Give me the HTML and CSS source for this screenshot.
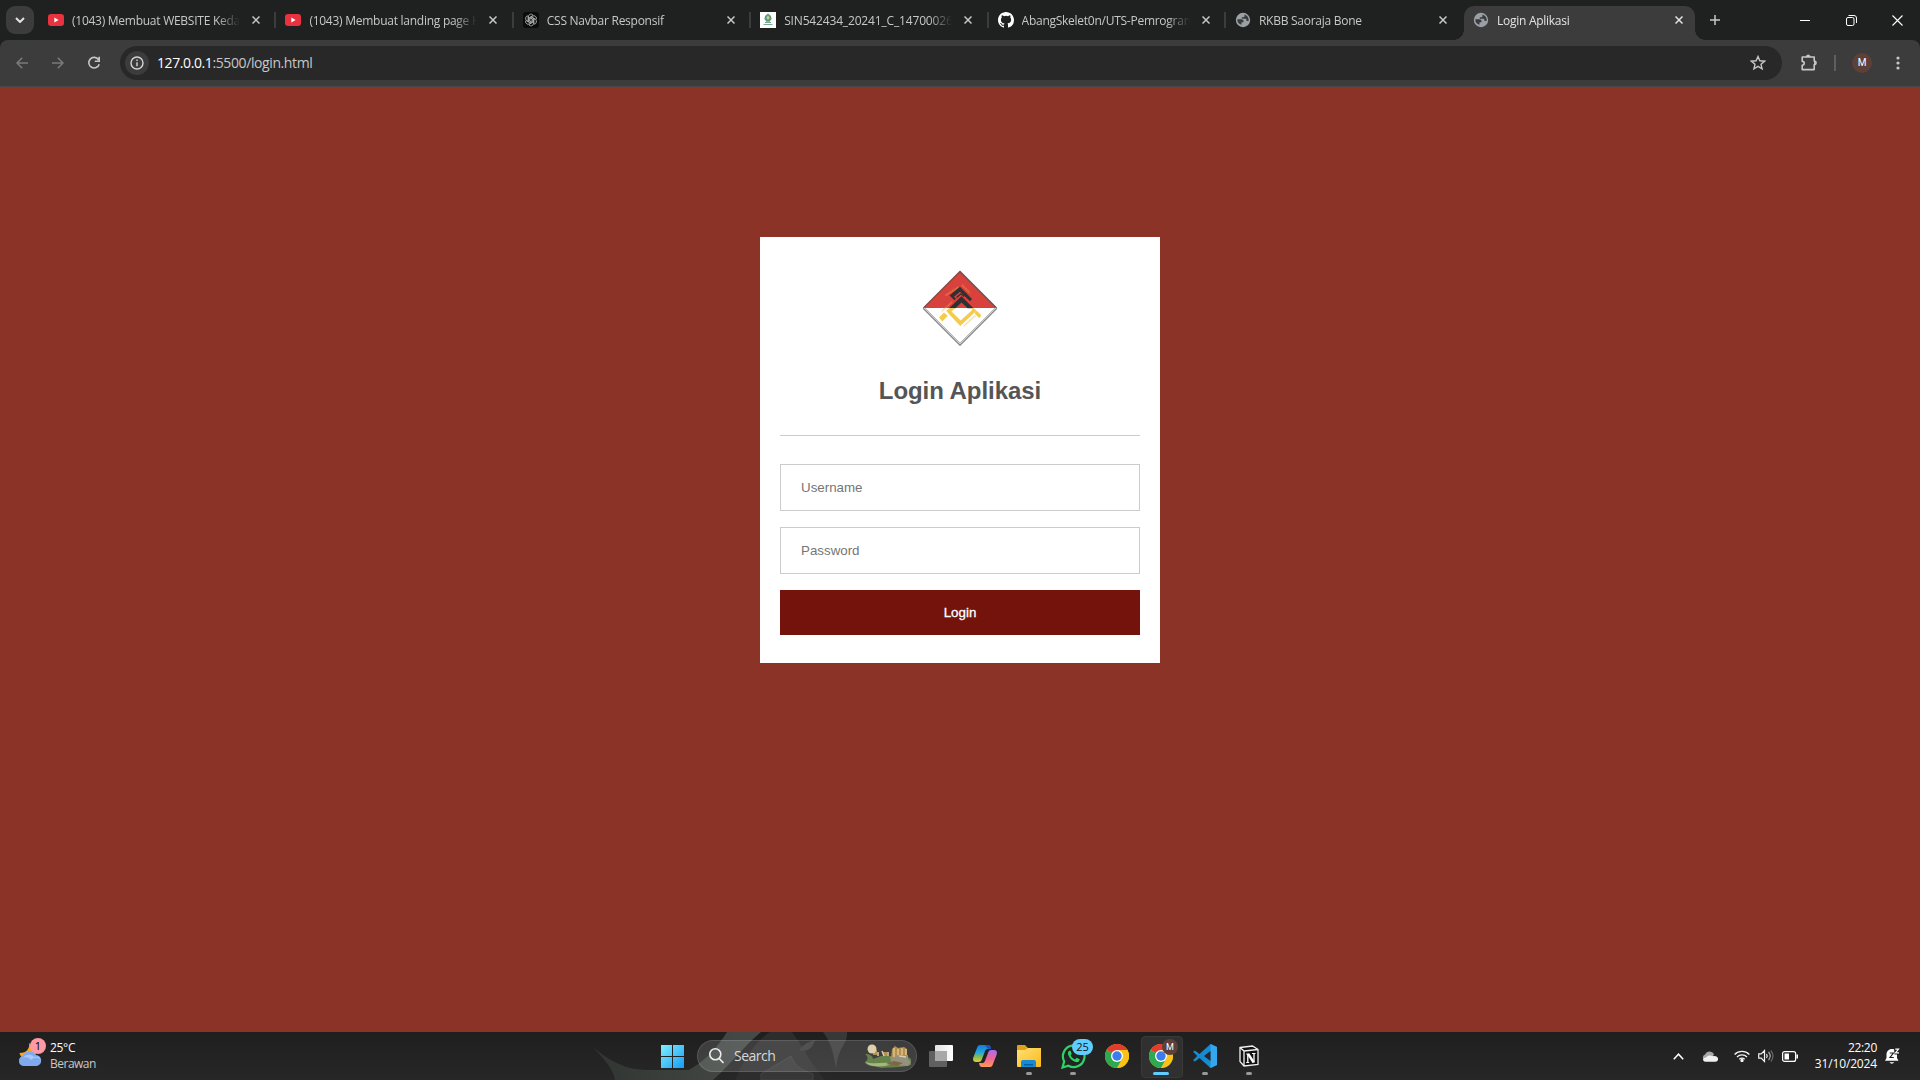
FILE: index.html
```
<!DOCTYPE html>
<html lang="id">
<head>
<meta charset="utf-8">
<title>Login Aplikasi</title>
<link rel="stylesheet" href="styles.css">
</head>
<body>
<svg width="0" height="0" class="defs">
  <defs>
    <symbol id="close" viewBox="0 0 8 8"><path d="M.5.5l7 7M7.5.5l-7 7" fill="none" stroke="currentColor" stroke-width="1.5"/></symbol>
    <symbol id="youtube" viewBox="0 0 16 16"><rect y="2" width="16" height="12" rx="3" fill="#e8323f"/><path d="M6.300 5.600v4.800L10.600 8z" fill="#fff"/></symbol>
    <symbol id="globe" viewBox="0 0 16 16"><circle cx="8" cy="8" r="7.200" fill="#9aa0a6"/><path d="M2.400 7.200h3.800c1.400 0 2.300.7 2.300 1.800v1.200h-2v2.600C3.700 12.200 2 9.900 2.400 7.200z" fill="#393b3c"/><path d="M9.500 2.600v1.300c0 .8-.6 1.300-1.400 1.300H6.800v1.500h3.400c.9 0 1.300.6 1.300 1.400v1h2.100c.5-2.900-1.200-5.700-4.100-6.500z" fill="#393b3c"/></symbol>
    <symbol id="chrome" viewBox="0 0 24 24">
      <circle cx="12" cy="12" r="12" fill="#fbc116"/>
      <path d="M12 12L1.600 6A12 12 0 0 1 22.400 6H12z" fill="#e33b2e"/>
      <path d="M12 12L1.600 6A12 12 0 0 0 12 24l5.200-9z" fill="#2da94f"/>
      <path d="M12 6h10.400A12 12 0 0 1 12 24l5.200-9z" fill="#fbc116"/>
      <circle cx="12" cy="12" r="6" fill="#fff"/><circle cx="12" cy="12" r="4.700" fill="#3b7ded"/>
    </symbol>
  </defs>
</svg>

<header class="tabstrip">
  <div class="tab-search"><svg width="10" height="6" viewBox="0 0 10 6"><path d="M1 1l4 4 4-4" fill="none" stroke="#e3e3e3" stroke-width="2"/></svg></div>
  <div class="tabs">
    <div class="tab"><svg class="favicon"><use href="#youtube"/></svg><span class="tab-title">(1043) Membuat WEBSITE Kedai</span><svg class="close"><use href="#close"/></svg></div>
    <div class="tab"><svg class="favicon"><use href="#youtube"/></svg><span class="tab-title">(1043) Membuat landing page H</span><svg class="close"><use href="#close"/></svg></div>
    <div class="tab"><svg class="favicon" viewBox="0 0 16 16"><rect width="16" height="16" rx="3" fill="#0b0b0b"/><g fill="none" stroke="#b8b8b8" stroke-width=".8"><path id="petal" d="M5.400 9.400V4.700a2.600 2.600 0 0 1 4.700-1.500M6.700 8.700V5.500L9.900 3.600"/><use href="#petal" transform="rotate(60 8 8)"/><use href="#petal" transform="rotate(120 8 8)"/><use href="#petal" transform="rotate(180 8 8)"/><use href="#petal" transform="rotate(240 8 8)"/><use href="#petal" transform="rotate(300 8 8)"/></g></svg><span class="tab-title">CSS Navbar Responsif</span><svg class="close"><use href="#close"/></svg></div>
    <div class="tab"><svg class="favicon" viewBox="0 0 16 16"><rect width="16" height="16" fill="#fff"/><path d="M8 1.500l3 2.500.6 3-2 2.700H6.400l-2-2.700L5 4z" fill="#5d9c83"/><path d="M8 3.300l1.500 2.500L8 8 6.500 5.800z" fill="#d8cf8d"/><path d="M5 10.500h6M3.500 12.500h9" stroke="#76a894" stroke-width="1"/></svg><span class="tab-title sin">SIN542434_20241_C_147000268</span><svg class="close"><use href="#close"/></svg></div>
    <div class="tab"><svg class="favicon" viewBox="0 0 16 16"><path fill="#fff" d="M8 0C3.580 0 0 3.580 0 8c0 3.540 2.290 6.530 5.470 7.590.4.070.55-.17.55-.38 0-.19-.01-.82-.01-1.490-2.010.37-2.530-.49-2.690-.94-.09-.23-.48-.94-.82-1.130-.28-.15-.68-.52-.01-.53.63-.01 1.080.58 1.230.82.72 1.210 1.870.87 2.330.66.07-.52.28-.87.51-1.070-1.780-.2-3.640-.89-3.640-3.950 0-.87.31-1.590.82-2.150-.08-.2-.36-1.020.08-2.120 0 0 .67-.21 2.200.82a7.600 7.600 0 0 1 4 0c1.530-1.040 2.200-.82 2.200-.82.44 1.100.16 1.920.08 2.120.51.56.82 1.270.82 2.150 0 3.070-1.870 3.750-3.650 3.950.29.25.54.73.54 1.480 0 1.070-.01 1.930-.01 2.200 0 .21.15.46.55.38A8 8 0 0 0 16 8c0-4.420-3.580-8-8-8z"/></svg><span class="tab-title">AbangSkelet0n/UTS-Pemrogram</span><svg class="close"><use href="#close"/></svg></div>
    <div class="tab"><svg class="favicon"><use href="#globe"/></svg><span class="tab-title">RKBB Saoraja Bone</span><svg class="close"><use href="#close"/></svg></div>
    <div class="tab active"><svg class="favicon"><use href="#globe"/></svg><span class="tab-title">Login Aplikasi</span><svg class="close"><use href="#close"/></svg></div>
  </div>
  <div class="new-tab"><svg width="10" height="10"><path d="M5 0v10M0 5h10" stroke="#c7c7c7" stroke-width="1.500"/></svg></div>
  <div class="window-controls">
    <div><svg width="10" height="10"><path d="M0 5.500h10" stroke="#fff"/></svg></div>
    <div><svg width="11" height="11" fill="none" stroke="#fff"><rect x=".5" y="2.500" width="7.500" height="8" rx="1.500"/><path d="M2.500 .5h5.500a2.500 2.500 0 0 1 2.500 2.500v5"/></svg></div>
    <div><svg width="11" height="11"><path d="M.5.5l10 10M10.500.5l-10 10" stroke="#fff" stroke-width="1.100"/></svg></div>
  </div>
</header>

<nav class="toolbar">
  <div class="nav-btn"><svg width="12" height="12" viewBox="0 0 12 12" fill="none" stroke="#7a7a7a" stroke-width="1.500"><path d="M12 6H1M6.200.7L1 6l5.200 5.300"/></svg></div>
  <div class="nav-btn"><svg width="12" height="12" viewBox="0 0 12 12" fill="none" stroke="#7a7a7a" stroke-width="1.500"><path d="M0 6h11M5.800.7L11 6l-5.200 5.300"/></svg></div>
  <div class="nav-btn"><svg width="14" height="14" viewBox="0 0 14 14" fill="none" stroke="#c7c7c7" stroke-width="1.600"><path d="M11.500 3.700A5.300 5.300 0 1 0 12.200 8.200M12.200.8v4.400H7.800"/></svg></div>
  <div class="omnibox">
    <div class="site-info"><svg width="14" height="14" viewBox="0 0 14 14"><circle cx="7" cy="7" r="6" fill="none" stroke="#d5d5d5" stroke-width="1.400"/><path d="M7 6.200v4M7 3.500V5" stroke="#d5d5d5" stroke-width="1.400"/></svg></div>
    <span class="url"><b>127.0.0.1</b>:5500/login.html</span>
    <svg class="star" width="16" height="16" viewBox="0 0 16 16"><path d="M8 1.500l1.900 4.300 4.700.4-3.600 3.100 1.100 4.600L8 11.400l-4.100 2.500L5 9.300 1.400 6.200l4.700-.4z" fill="none" stroke="#c7c7c7" stroke-width="1.400"/></svg>
  </div>
  <div class="extensions"><svg width="18" height="18" viewBox="0 0 18 18"><path d="M2.200 3h12v4c2.400-.2 2.400 3.600 0 3.600v5h-12v-4.300c2.700-.3 2.700-3.700 0-3.900z" fill="none" stroke="#c7c7c7" stroke-width="1.600" stroke-linejoin="round"/><path d="M6.200 3a2 2 0 0 1 4 0M14 7a2 2 0 0 1 0 3.600" fill="#c7c7c7" stroke="#c7c7c7"/></svg></div>
  <i class="divider"></i>
  <div class="avatar">M</div>
  <svg class="dots" width="4" height="16" fill="#c7c7c7"><circle cx="2" cy="3" r="1.600"/><circle cx="2" cy="8" r="1.600"/><circle cx="2" cy="13" r="1.600"/></svg>
</nav>

<main class="page">
  <form class="login-card">
    <svg class="logo" width="76" height="76" viewBox="0 0 76 76">
      <path d="M38 1.500L74.500 38h-73z" fill="#d9423c"/>
      <path d="M1.500 38L38 1.500 74.500 38" fill="none" stroke="#7a4a4b" stroke-width="1.500"/>
      <path d="M1.500 38L38 74.500 74.500 38" fill="none" stroke="#8b8b8b" stroke-width="2.400"/>
      <path d="M2 38L38 74 74 38" fill="none" stroke="#dedede" stroke-width=".8"/>
      <path d="M27.500 25.500L38 16.800 50 29l-2 2.200L38 21.800l-6 5 2 2-1.500 1.500z" fill="#303032"/>
      <path d="M34.500 27.500l4.500-3.700 3 2.700" fill="none" stroke="#303032" stroke-width="1.300"/>
      <path d="M27 38.200L39.500 26.300 51.500 38.200h-6L39.500 32.500 33.500 38.200z" fill="#303032"/>
      <path d="M27 38.200h6l-3.500 3.300 9.200 9 11.800-10.700-1.500-1.600h3l2.500 2.600L38.200 56 24.200 41z" fill="#f5cb49"/>
      <path d="M17 47.500l5-5 3.800 3.300-5.500 5.700z" fill="#f5cb49"/>
      <path d="M52.500 43l2.300-2.300 4.700 4.800-2.500 2.500z" fill="#f5cb49"/>
      <path d="M23.500 25.500L36.500 17M40 15l8 8M20 41l10-9M42 56l12-11" fill="none" stroke="#e7b34b" stroke-width="1.800" stroke-dasharray="1 .6" opacity=".55"/>
    </svg>
    <h1>Login Aplikasi</h1>
    <hr>
    <input type="text" placeholder="Username">
    <input type="password" placeholder="Password">
    <button type="button">Login</button>
  </form>
</main>

<footer class="taskbar">
  <svg class="wallpaper" width="290" height="48" viewBox="0 0 290 48">
    <defs><linearGradient id="sweep"><stop stop-color="#303532"/><stop offset="1" stop-color="#464b48"/></linearGradient></defs>
    <path d="M1 15c16 14 33 23 54 23h42C115 28 126 14 135 0h34c-15 12-32 34-48 48H23C22 37 9 24 1 15z" fill="url(#sweep)"/>
    <path d="M178 0c-14 9-26 26-35 48h90c-8-10-16-20-20-29L200 0z" fill="#2d2d2d"/>
    <path d="M169 48v-6l30-18c3 9 10 14 22 18v6z" fill="#373737" stroke="#424242"/>
    <path d="M207 19c3-6 9-9 16-11-2 8-6 11-16 11zM231 0h24c1 13-9 13-11 38-2-14-4-26-13-38z" fill="#383838"/>
  </svg>
  <div class="weather">
    <div class="weather-icon">
      <svg width="26" height="24" viewBox="0 0 26 24"><path d="M11 0c1 5-2 10-9.500 10 1 4 4 6 8 6 5 0 9-4 9-9z" fill="#f7a823"/><path d="M5.500 23a5 5 0 0 1-.4-9.900A7 7 0 0 1 18 12a5.600 5.600 0 0 1 1 11z" fill="#7faaf0"/><path d="M3 16c4-3 8-2 10 1 3-3 7-3 10 0-2-4-5-4-7-3-3-4-10-2-10 0z" fill="#a9c7fb"/></svg>
      <b class="weather-badge">1</b>
    </div>
    <div class="weather-text"><span class="temp">25°C</span><span class="sky">Berawan</span></div>
  </div>
  <div class="apps">
    <div class="app start"><svg width="23" height="23"><defs><linearGradient id="win" x1="0" y1="0" x2="23" y2="23" gradientUnits="userSpaceOnUse"><stop stop-color="#82efff"/><stop offset="1" stop-color="#139df5"/></linearGradient></defs><path d="M0 0h11v11H0zM12 0h11v11H12zM0 12h11v11H0zM12 12h11v11H12z" fill="url(#win)"/></svg></div>
    <div class="search">
      <svg width="16" height="16" viewBox="0 0 16 16"><circle cx="6.300" cy="6.300" r="5.500" fill="none" stroke="#ececec" stroke-width="1.600"/><path d="M10.200 10.500l4.300 4.500" stroke="#ececec" stroke-width="1.800"/></svg>
      <span>Search</span>
      <svg class="doodle" width="48" height="24" viewBox="0 0 48 24"><path d="M1 10c5 0 8 2 8 5l8-3h26l4 3v6c-10 3-22 2-29 3C9 22 2 22 1 18c4-3 3-5 0-8z" fill="#66814b"/><path d="M1 18c10 3 20-1 27 2-7 3-22 4-27-2z" fill="#a4b879"/><path d="M9 6h4v5H9zM19 8h4v4h-4zM28 5l3-3 3 2 6-1 3 2v9H27z" fill="#b39052"/><path d="M30 4v9M34 5v8M38 4v9M42 5v8" stroke="#ead094" stroke-width="1.200"/><path d="M26 13h5l3-2h10v4l3 3-3 4-16-1z" fill="#96917f"/><path d="M14 8v4M18 7l2 5M24 8v4M35 12l7 1" stroke="#d8cfae" stroke-width="1.500"/><path d="M22 20l8-3 9 2-6 3z" fill="#7c6844"/><circle cx="8" cy="5" r="4.500" fill="#ddd0ad"/></svg>
    </div>
    <div class="app"><svg width="24" height="22"><defs><linearGradient id="tv"><stop stop-color="#e1e1e1"/><stop offset="1" stop-color="#fff"/></linearGradient></defs><rect x="6" width="18" height="16" rx="1" fill="url(#tv)"/><rect y="6" width="18" height="16" rx="1" fill="#606060"/><path d="M6 6h12v10H6z" fill="#a8a8a8"/></svg></div>
    <div class="app"><svg width="24" height="23" viewBox="0 0 24 23"><defs><linearGradient id="cp" x1="0" y1="0" x2="0" y2="1"><stop stop-color="#127ce0"/><stop offset=".45" stop-color="#28a8d8"/><stop offset=".65" stop-color="#6dbb65"/><stop offset="1" stop-color="#f1c82b"/></linearGradient><linearGradient id="cp2" x1="0" y1="0" x2="0" y2="1"><stop stop-color="#a66df2"/><stop offset=".5" stop-color="#ee6697"/><stop offset="1" stop-color="#ff9a53"/></linearGradient></defs><path d="M7 0h8c2 0 2.500 1.500 3 4h-3.500c-2 0-2.500 2-3 3.500L9 14c-.5 2-1.500 3-3.500 3H3c-3 0-3.500-2.500-2.500-5L4 3C4.500 1 5.500 0 7 0z" fill="url(#cp)"/><path d="M17 22H9c-2 0-2.500-1.500-3-4h3.500c2 0 2.500-2 3-3.500L15 8c.5-2 1.500-3 3.500-3H21c3 0 3.500 2.500 2.500 5L20 19c-.5 2-1.500 3-3 3z" fill="url(#cp2)"/><path d="M12 0h3c2 0 2.500 1.500 3 4h-3z" fill="#1755bd"/></svg></div>
    <div class="app running"><svg width="24" height="22" viewBox="0 0 24 22"><defs><linearGradient id="folder" x2="1" y2="1"><stop stop-color="#ffe074"/><stop offset="1" stop-color="#fab91a"/></linearGradient></defs><path d="M0 1q0-1 1-1h7l3 3h12l1 2v5H0z" fill="#dfa116"/><path d="M0 5h8l3-2h13v18q0 1-1 1H1q-1 0-1-1z" fill="url(#folder)"/><path d="M4 22v-5q0-2 2-2h11q2 0 2 2v5z" fill="#168bd4"/><path d="M7 19h9v1.500H7z" fill="#075da8"/></svg></div>
    <div class="app running"><svg width="25" height="25" viewBox="0 0 25 25"><path d="M1.500 23.500l1.700-6.100a10.800 10.800 0 1 1 4.200 4.300z" fill="none" stroke="#2bd464" stroke-width="2.200"/><path d="M8.200 6.700c-1.300 1-1.600 2.600-.8 4.500 1.200 3 4 5.900 7.200 6.900 2 .6 3.900-.5 4.100-2.900l-3-1.500-1.600 1.700c-2.200-.8-3.600-2.200-4.500-4.200l1.100-1.500-1.200-3z" fill="#2bd464"/></svg><b class="count">25</b></div>
    <div class="app"><svg width="24" height="24"><use href="#chrome"/></svg></div>
    <div class="app running current"><svg width="24" height="24"><use href="#chrome"/></svg><b class="profile">M</b></div>
    <div class="app running"><svg width="24" height="24" viewBox="0 0 24 24"><path d="M17.500 0L24 3v18l-6.500 3L6.500 14 2 17.500l-2-1.300L4.200 12 0 7.800l2-1.300L6.500 10z" fill="#168bd2"/><path d="M17.500 0L24 3v18l-6.500 3z" fill="#35a8ed"/><path d="M17.500 7v10L11 12z" fill="#252525"/></svg></div>
    <div class="app running"><svg width="20" height="22" viewBox="0 0 20 22"><path d="M1 2.500L13.500 1 19 4.500v15L5 21l-4-4.500z" fill="#111" stroke="#f0f0f0" stroke-width="1.300"/><path d="M1 2.500L5 6l14-1.500M5 6v15" fill="none" stroke="#f0f0f0" stroke-width="1.300"/><path d="M7.300 9h2.700M13 8.500h3.500M7.200 17.500h3" stroke="#fff" stroke-width="1.200"/><path d="M8.800 9v8.500M15 8.500v9" stroke="#fff" stroke-width="1.300"/><path d="M9.200 9l5.500 8.500" stroke="#fff" stroke-width="2.400"/></svg></div>
  </div>
  <div class="tray">
    <div class="tray-item"><svg width="11" height="7"><path d="M.8 6.200l4.700-5 4.700 5" fill="none" stroke="#fff" stroke-width="1.500"/></svg></div>
    <div class="tray-item"><svg width="16" height="11" viewBox="0 0 16 11"><path d="M3.500 10A3.400 3.400 0 0 1 3 3.500a5 5 0 0 1 9-.5l-3 7z" fill="#a7a7a7"/><path d="M3.500 10.700C0 10 .6 6.800 4 6.500c2-2.600 5-2.400 7-1.300 6-1 6.500 5 2.500 5.500z" fill="#f0f0f0"/></svg></div>
    <div class="tray-item"><svg width="16" height="12" viewBox="0 0 16 12" fill="none" stroke="#f4f4f4" stroke-width="1.300"><path d="M.6 4.500a10.500 10.500 0 0 1 14.800 0M3 7a7 7 0 0 1 10 0M5.300 9.300a4 4 0 0 1 5.400 0"/><circle cx="8" cy="10.500" r="1" fill="#fff"/></svg></div>
    <div class="tray-item volume"><svg width="16" height="14" viewBox="0 0 16 14" fill="none" stroke="#f0f0f0" stroke-width="1.200"><path d="M.7 4.800h2.500L6.500 1.500v11L3.200 9.200H.7zM8.500 5q1.500 2 0 4"/><path d="M10.500 3q3.500 4 0 8" stroke="#aaa"/><path d="M12.800 1.500q4.500 5.500 0 11" stroke="#666"/></svg></div>
    <div class="tray-item"><svg width="16" height="11" viewBox="0 0 16 11"><rect x=".6" y=".6" width="13" height="9.800" rx="2" fill="none" stroke="#fff" stroke-width="1.200"/><rect x="2.500" y="2.500" width="4.500" height="6" fill="#fff"/><path d="M15.200 3.500v4" stroke="#fff" stroke-width="1.600"/></svg></div>
    <div class="clock"><span class="time">22:20</span><span class="date">31/10/2024</span></div>
    <div class="bell"><svg width="15" height="17" viewBox="0 0 15 17"><path d="M7 1C3.500 1 1.500 3.500 1.500 6.500V10L0 12.800h13.500L12 10V6C12 3 10 1 7 1z" fill="#fff"/><path d="M4.300 14.300h5Q6.800 17 4.300 14.300z" fill="#fff"/><path d="M9 0h6v6.500H9.500z" fill="#222"/><path d="M4.800 5h3.600L5 9.500h3.800" fill="none" stroke="#222" stroke-width="1.200"/><path d="M10.300 1.200h3.200l-3 3.700h3.500" fill="none" stroke="#fff" stroke-width="1.200"/></svg></div>
  </div>
</footer>
</body>
</html>
```
FILE: styles.css
```
* { box-sizing: border-box; }
body {
  margin: 0;
  width: 1920px;
  height: 1080px;
  overflow: hidden;
  display: flex;
  flex-direction: column;
  background: #1f2120;
  font-family: "Open Sans", "Noto Sans", sans-serif;
}
svg { display: block; flex: none; }
.defs { position: absolute; }

/* Tab strip */
.tabstrip { height: 40px; flex: none; display: flex; background: #1f2120; color: #c7c7c7; }
.tab-search { width: 28px; height: 28px; margin: 6px 4px 0 6px; border-radius: 9px; background: #3c3c3c; display: flex; align-items: center; justify-content: center; }
.tabs { display: flex; width: 1658px; }
.tab { position: relative; width: 237.4px; flex: none; display: flex; align-items: center; padding: 0 14px 0 10px; }
.tab + .tab:not(.active)::before { content: ""; position: absolute; left: -1px; top: 12px; width: 2px; height: 16px; background: #3c3c3c; }
.favicon { width: 16px; height: 16px; }
.tab-title { width: 168px; margin-left: 8px; overflow: hidden; white-space: nowrap; font-size: 12px; line-height: 20px; letter-spacing: -.26px; padding-top: 1px; -webkit-mask-image: linear-gradient(90deg, #000 145px, transparent 168px); mask-image: linear-gradient(90deg, #000 145px, transparent 168px); }
.tab-title.sin { letter-spacing: -.16px; }
.close { width: 8px; height: 8px; margin-left: 12px; color: #c7c7c7; }
.tab.active { width: 231px; height: 34px; margin: 6px 0 0 1.6px; padding: 0 12px 6px 9px; background: #3c3c3c; border-radius: 10px 10px 0 0; color: #e3e3e3; }
.tab.active .close { margin-left: 11px; color: #e3e3e3; }
.tab.active::before, .tab.active::after { content: ""; position: absolute; bottom: 0; width: 10px; height: 10px; }
.tab.active::before { left: -10px; background: radial-gradient(circle at 0 0, transparent 9.500px, #3c3c3c 10px); }
.tab.active::after { right: -10px; background: radial-gradient(circle at 100% 0, transparent 9.500px, #3c3c3c 10px); }
.new-tab { width: 38px; display: flex; align-items: center; justify-content: center; }
.window-controls { margin-left: auto; display: flex; }
.window-controls div { width: 46px; display: flex; align-items: center; justify-content: center; }

/* Toolbar */
.toolbar { height: 47px; flex: none; display: flex; align-items: center; padding: 0 20px 1px 4px; background: #3c3c3c; border-bottom: 1px solid #474747; border-radius: 8px 8px 0 0; }
.nav-btn { width: 36px; display: flex; justify-content: center; }
.omnibox { width: 1662px; height: 34px; margin-left: 8px; padding: 0 16px 0 5px; display: flex; align-items: center; border-radius: 17px; background: #282828; }
.site-info { width: 24px; height: 24px; border-radius: 50%; background: #3c3c3c; display: flex; align-items: center; justify-content: center; }
.url { flex: 1; margin-left: 8px; color: #c7c7c7; font-size: 14px; line-height: 20px; letter-spacing: -.4px; }
.url b { color: #fff; font-weight: 400; }
.extensions { width: 18px; margin-left: 18px; }
.divider { width: 2px; height: 16px; margin-left: 16px; background: #5e5e5e; }
.avatar { width: 20px; height: 20px; margin-left: 16px; border-radius: 50%; background: #5d4037; color: #fff; text-align: center; font: 400 10px/20px Roboto, sans-serif; }
.dots { margin-left: 24px; }

/* Login page */
.page { height: 945px; flex: none; padding-top: 150px; background: #8a3326; font-family: "Liberation Sans", Arial, sans-serif; }
.login-card { width: 400px; height: 426px; margin: 0 auto; padding: 33px 20px 28px; background: #fff; display: flex; flex-direction: column; }
.logo { align-self: center; }
.login-card h1 { margin: 27px 0 0; text-align: center; color: #555; font-size: 24px; line-height: 36px; letter-spacing: -.05px; }
.login-card hr { width: 100%; height: 1px; margin: 26px 0 28px; border: 0; background: #ccc; }
.login-card input { width: 100%; height: 47px; margin: 0 0 16px; padding: 0 20px; border: 1px solid #ccc; outline: 0; background: #fff; font: 13.333px "Liberation Sans", Arial, sans-serif; }
.login-card input::placeholder { color: #757575; }
.login-card button { width: 100%; height: 45px; padding: 0; border: 0; background: #74120c; color: #fff; font: 13.333px "Liberation Sans", Arial, sans-serif; -webkit-text-stroke: .3px #fff; }

/* Taskbar */
.taskbar { position: relative; height: 48px; flex: none; display: flex; background: linear-gradient(#1f1f1f, #272727); color: #fff; }
.wallpaper { position: absolute; left: 592px; top: 0; }
.weather { width: 651px; display: flex; align-items: center; padding-left: 18px; }
.weather-icon { position: relative; width: 26px; margin-top: -2px; }
.weather-badge { position: absolute; left: 12px; top: -5px; width: 16px; height: 16px; border-radius: 50%; background: #ff99a4; color: #000; text-align: center; font-weight: 400; font-size: 11px; line-height: 16px; }
.weather-text { display: flex; flex-direction: column; margin-left: 6px; font-size: 12px; line-height: 16px; }
.temp { letter-spacing: -.3px; }
.sky { color: #c8c8c8; letter-spacing: -.5px; }
.apps { position: relative; display: flex; align-items: center; }
.app { position: relative; width: 44px; height: 48px; display: flex; align-items: center; justify-content: center; }
.start { padding-right: 2px; }
.search { width: 220px; height: 32px; margin: 0 2px; padding: 0 4px 0 11px; display: flex; align-items: center; border: 1px solid rgba(255,255,255,.12); border-radius: 16px; background: rgba(255,255,255,.13); }
.search span { flex: 1; margin-left: 9px; font-size: 14px; line-height: 20px; color: #d8d8d8; letter-spacing: -.5px; }
.running::after { content: ""; position: absolute; bottom: 5px; width: 6px; height: 3px; border-radius: 2px; background: #999; }
.current::before { content: ""; position: absolute; left: 2px; top: 4px; width: 40px; height: 40px; border-radius: 4px; background: #303030; border: 1px solid #393939; }
.current svg { position: relative; }
.current::after { width: 16px; background: #60cdff; }
.count { position: absolute; left: 21px; top: 7px; width: 21px; height: 16px; border-radius: 8px; background: #60cdff; color: #111; text-align: center; font-weight: 400; font-size: 11px; line-height: 16px; }
.profile { position: absolute; left: 23px; top: 7px; width: 16px; height: 16px; border-radius: 50%; background: #5d4037; text-align: center; font: 400 9px/16px Roboto, sans-serif; }
.tray { margin-left: auto; display: flex; align-items: center; }
.tray-item { width: 32px; display: flex; justify-content: center; }
.volume, .volume + .tray-item { width: 24px; }
.volume { margin-left: -4px; }
.clock { width: 75px; display: flex; flex-direction: column; align-items: flex-end; font-size: 12px; line-height: 16px; }
.time { letter-spacing: -.3px; }
.date { letter-spacing: -.15px; }
.bell { margin: 0 20px 0 8px; }
```
